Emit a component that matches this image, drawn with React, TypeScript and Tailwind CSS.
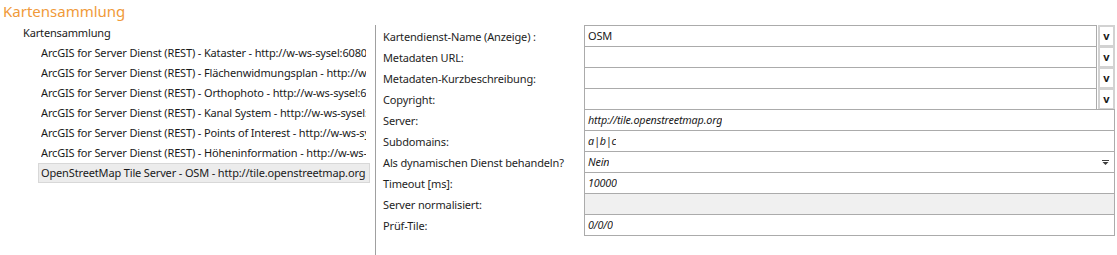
import React from 'react';

const treeItems = [
  'ArcGIS for Server Dienst (REST) - Kataster - http://w-ws-sysel:6080/arcgis/rest/services/Kataster/MapServer',
  'ArcGIS for Server Dienst (REST) - Flächenwidmungsplan - http://w-ws-sysel:6080/arcgis/rest/services/FWP/MapServer',
  'ArcGIS for Server Dienst (REST) - Orthophoto - http://w-ws-sysel:6080/arcgis/rest/services/Orthophoto/MapServer',
  'ArcGIS for Server Dienst (REST) - Kanal System - http://w-ws-sysel:6080/arcgis/rest/services/Kanal/MapServer',
  'ArcGIS for Server Dienst (REST) - Points of Interest - http://w-ws-sysel:6080/arcgis/rest/services/POI/MapServer',
  'ArcGIS for Server Dienst (REST) - Höheninformation - http://w-ws-sysel:6080/arcgis/rest/services/DGM/MapServer',
  'OpenStreetMap Tile Server - OSM - http://tile.openstreetmap.org',
];

type Field = {
  label: string;
  value?: string;
  italic?: boolean;
  kind?: 'more' | 'select' | 'disabled';
};

const fields: Field[] = [
  { label: 'Kartendienst-Name (Anzeige) :', value: 'OSM', kind: 'more' },
  { label: 'Metadaten URL:', kind: 'more' },
  { label: 'Metadaten-Kurzbeschreibung:', kind: 'more' },
  { label: 'Copyright:', kind: 'more' },
  { label: 'Server:', value: 'http://tile.openstreetmap.org', italic: true },
  { label: 'Subdomains:', value: 'a|b|c', italic: true },
  { label: 'Als dynamischen Dienst behandeln?', value: 'Nein', italic: true, kind: 'select' },
  { label: 'Timeout [ms]:', value: '10000', italic: true },
  { label: 'Server normalisiert:', kind: 'disabled' },
  { label: 'Prüf-Tile:', value: '0/0/0', italic: true },
];

const ValueText: React.FC<{ f: Field }> = ({ f }) =>
  f.value ? (
    <span
      className={
        f.italic
          ? 'truncate pl-[3px] text-[10.75px] italic tracking-[-0.15px] text-[#1a1a1a]'
          : 'truncate pl-[3px] text-[11px] tracking-[-0.15px] text-[#1a1a1a]'
      }
    >
      {f.value}
    </span>
  ) : null;

const FieldRow: React.FC<{ f: Field }> = ({ f }) => (
  <div className="flex h-[21px] items-start">
    <div className="flex h-[21px] w-[201px] shrink-0 items-center whitespace-nowrap pt-px text-[11px] leading-[15px] tracking-[-0.15px] text-[#1e1e1e]">
      {f.label}
    </div>
    {f.kind === 'more' ? (
      <div className="flex h-[22px] w-[531px] shrink-0">
        <div className="flex h-[22px] w-[513px] items-center border border-[#ababab] bg-white">
          <ValueText f={f} />
        </div>
        <div className="ml-px flex h-[22px] flex-1 items-center justify-center border-2 border-[#d2d2d2] bg-white pb-px text-[11px] font-bold leading-none text-[#1a1a1a]">
          v
        </div>
      </div>
    ) : (
      <div
        className={
          f.kind === 'disabled'
            ? 'flex h-[22px] w-[531px] shrink-0 items-center border border-[#ababab] bg-[#f0f0f0]'
            : 'flex h-[22px] w-[531px] shrink-0 items-center border border-[#ababab] bg-white'
        }
      >
        <ValueText f={f} />
        {f.kind === 'select' && (
          <svg className="ml-auto mr-[5px]" width="7" height="5" viewBox="0 0 7 5">
            <rect x="0" y="0" width="7" height="1" fill="#3c3c3c" />
            <path d="M0.5 2 L6.5 2 L3.5 5 Z" fill="#3c3c3c" />
          </svg>
        )}
      </div>
    )}
  </div>
);

const App: React.FC = () => {
  return (
    <div
      className="h-[255px] w-[1117px] overflow-hidden bg-white"
      style={{ fontFamily: '"Noto Sans", "Open Sans", sans-serif' }}
    >
      <div className="h-[22px] pl-[3px] text-[15px] leading-[22px] text-[#f09a3a]">Kartensammlung</div>
      <div className="flex">
        {/* Baum */}
        <div className="w-[375px] shrink-0 pt-px">
          <div className="flex h-[20px] items-center pl-[23px] text-[11px] tracking-[-0.15px] text-[#1a1a1a]">
            Kartensammlung
          </div>
          {treeItems.map((t, i) => {
            const selected = i === treeItems.length - 1;
            return (
              <div
                key={i}
                className={
                  selected
                    ? 'ml-[38px] mr-[5px] flex h-[20px] items-center border border-[#d8d8d8] bg-[#ececec] pl-[2px] pr-[3px] text-[11px] tracking-[-0.15px] text-[#1a1a1a]'
                    : 'ml-[38px] mr-[5px] flex h-[20px] items-center border border-transparent pl-[2px] pr-[3px] text-[11px] tracking-[-0.15px] text-[#1a1a1a]'
                }
              >
                <div className="min-w-0 flex-1 overflow-hidden whitespace-nowrap">{t}</div>
              </div>
            );
          })}
        </div>
        {/* Eigenschaften */}
        <div className="mt-[3px] h-[230px] flex-1 border-l border-[#a0a0a0] pl-[7px]">
          {fields.map((f, i) => (
            <FieldRow key={i} f={f} />
          ))}
        </div>
      </div>
    </div>
  );
};

export default App;
